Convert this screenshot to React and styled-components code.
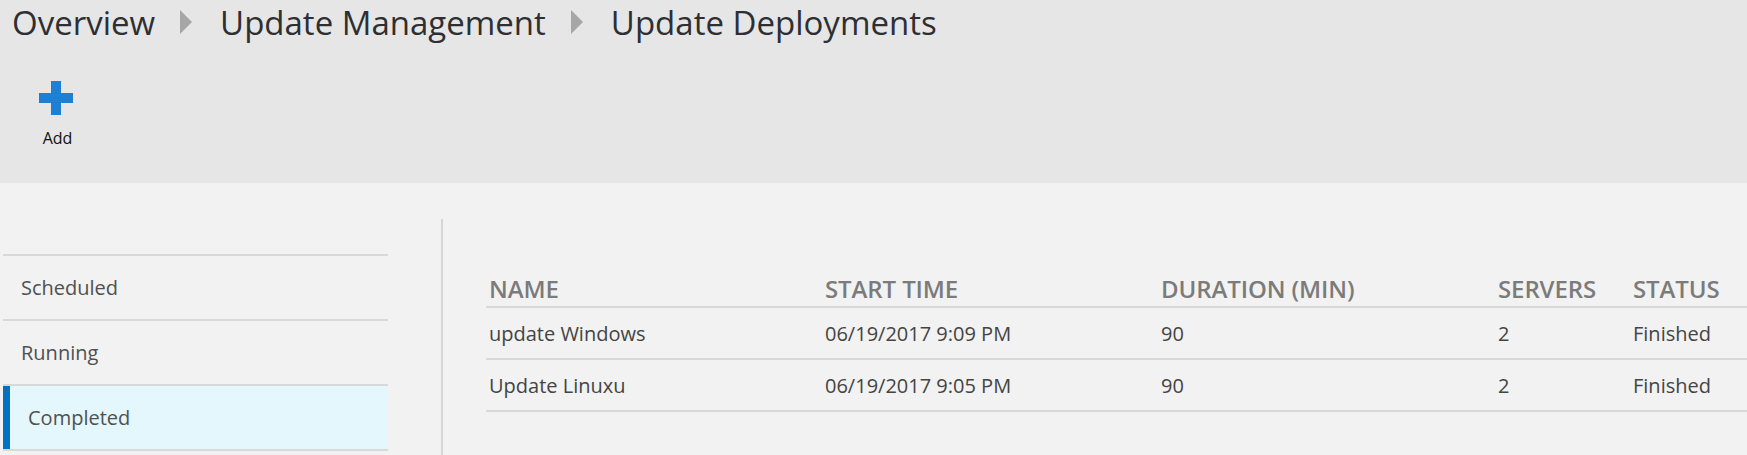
import React from "react";
import styled, { createGlobalStyle } from "styled-components";

const GlobalStyle = createGlobalStyle`
  html, body { margin: 0; padding: 0; }
  body {
    background: #f2f2f2;
    font-family: "Open Sans", "Noto Sans", "Liberation Sans", sans-serif;
    overflow: hidden;
  }
`;

const Page = styled.div`
  width: 1747px;
  height: 455px;
  display: flex;
  flex-direction: column;
  overflow: hidden;
`;

const Header = styled.header`
  height: 183px;
  background: #e6e6e6;
  display: flex;
  flex-direction: column;
  flex-shrink: 0;
`;

const Breadcrumb = styled.nav`
  display: flex;
  align-items: center;
  padding: 0 0 0 12px;
  height: 45px;
`;

const Crumb = styled.span`
  font-size: 33px;
  line-height: 45px;
  color: #2e2f33;
  white-space: nowrap;
`;

const Chevron = styled.svg`
  width: 12px;
  height: 24px;
  flex-shrink: 0;
  margin: -1px 28px 0 25px;
`;

const Toolbar = styled.div`
  display: flex;
  padding: 36px 0 0 31px;
`;

const ToolButton = styled.button`
  width: 50px;
  display: flex;
  flex-direction: column;
  align-items: center;
  gap: 12px;
  background: none;
  border: 0;
  padding: 0;
  cursor: pointer;
  font-family: inherit;
`;

const ToolLabel = styled.span`
  font-size: 16px;
  line-height: 22px;
  color: #111;
  padding-left: 3px;
`;

const Body = styled.main`
  flex: 1;
  display: flex;
  align-items: stretch;
  padding-left: 3px;
  background: #f2f2f2;
`;

const SideNav = styled.ul`
  list-style: none;
  margin: 71px 0 0;
  padding: 0;
  width: 385px;
  flex-shrink: 0;
  align-self: flex-start;
  border-bottom: 2px solid #d9d9d9;
`;

const NavItem = styled.li`
  height: 63px;
  display: flex;
  align-items: center;
  border-top: 2px solid #d9d9d9;
  padding-left: ${(p) => (p.$active ? "25px" : "18px")};
  background: ${(p) => (p.$active ? "#e4f7fd" : "transparent")};
  box-shadow: ${(p) => (p.$active ? "inset 7px 0 0 #0072c6" : "none")};
  font-size: 20px;
  line-height: 27px;
  color: #505050;
`;

const Divider = styled.div`
  width: 2px;
  background: #d6d6d6;
  margin: 36px 0 0 53px;
  flex-shrink: 0;
`;

const TableWrap = styled.section`
  flex: 1;
  margin: 89px 0 0 43px;
`;

const Table = styled.table`
  width: 100%;
  border-collapse: collapse;
  table-layout: fixed;
`;

const Th = styled.th`
  text-align: left;
  font-size: 24px;
  line-height: 33px;
  font-weight: 600;
  color: #7b7b7b;
  padding: 0 3px 1px;
  border-bottom: 2px solid #d9d9d9;
  white-space: nowrap;
  letter-spacing: -0.1px;
`;

const Td = styled.td`
  height: 50px;
  padding: 0 3px;
  font-size: 20px;
  line-height: 27px;
  color: #444;
  border-bottom: 2px solid #d9d9d9;
  vertical-align: middle;
  white-space: nowrap;
`;

const PlusIcon = () => (
  <svg width="34" height="34" viewBox="0 0 34 34">
    <rect x="12" y="0" width="10" height="34" fill="#1e7fd3" />
    <rect x="0" y="12" width="34" height="10" fill="#1e7fd3" />
  </svg>
);

const Arrow = () => (
  <Chevron viewBox="0 0 12 24">
    <polygon points="0,0 12,12 0,24" fill="#a6a6a6" />
  </Chevron>
);

const crumbs = ["Overview", "Update Management", "Update Deployments"];
const navItems = ["Scheduled", "Running", "Completed"];
const columns = [
  { label: "NAME", width: 336 },
  { label: "START TIME", width: 336 },
  { label: "DURATION (MIN)", width: 337 },
  { label: "SERVERS", width: 135 },
  { label: "STATUS", width: null },
];
const rows = [
  ["update Windows", "06/19/2017 9:09 PM", "90", "2", "Finished"],
  ["Update Linuxu", "06/19/2017 9:05 PM", "90", "2", "Finished"],
];

export default function App() {
  return (
    <Page>
      <GlobalStyle />
      <Header>
        <Breadcrumb>
          {crumbs.map((c, i) => (
            <React.Fragment key={c}>
              {i > 0 && <Arrow />}
              <Crumb>{c}</Crumb>
            </React.Fragment>
          ))}
        </Breadcrumb>
        <Toolbar>
          <ToolButton>
            <PlusIcon />
            <ToolLabel>Add</ToolLabel>
          </ToolButton>
        </Toolbar>
      </Header>
      <Body>
        <SideNav>
          {navItems.map((n) => (
            <NavItem key={n} $active={n === "Completed"}>
              {n}
            </NavItem>
          ))}
        </SideNav>
        <Divider />
        <TableWrap>
          <Table>
            <colgroup>
              {columns.map((c) => (
                <col key={c.label} style={c.width ? { width: c.width } : undefined} />
              ))}
            </colgroup>
            <thead>
              <tr>
                {columns.map((c) => (
                  <Th key={c.label}>{c.label}</Th>
                ))}
              </tr>
            </thead>
            <tbody>
              {rows.map((r) => (
                <tr key={r[0]}>
                  {r.map((cell, i) => (
                    <Td key={i}>{cell}</Td>
                  ))}
                </tr>
              ))}
            </tbody>
          </Table>
        </TableWrap>
      </Body>
    </Page>
  );
}
